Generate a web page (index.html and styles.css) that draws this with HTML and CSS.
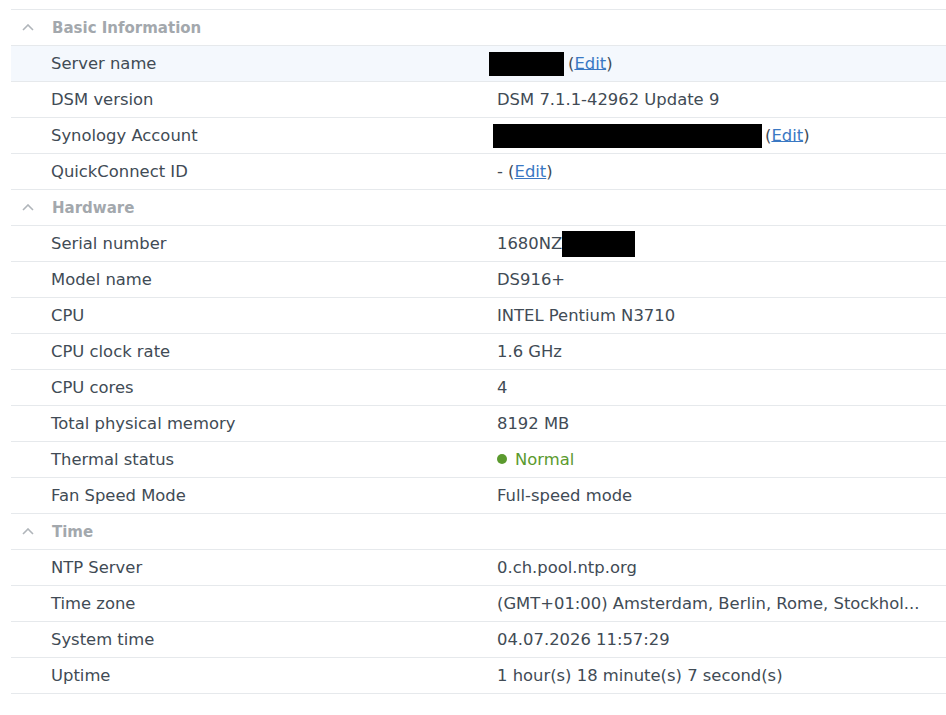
FILE: index.html
```html
<!DOCTYPE html>
<html lang="en">
<head>
    <meta charset="UTF-8">
    <meta name="viewport" content="width=device-width, initial-scale=1.0">
    <title>Info Center</title>
    <link rel="stylesheet" href="styles.css">
</head>
<body>
    <div class="panel">
        <table class="info-table">
            <colgroup>
                <col class="col-label">
                <col class="col-value">
            </colgroup>
            <tbody>
                <tr class="group"><td colspan="2"><svg class="chevron" viewBox="0 0 12 7" width="12" height="7"><polyline points="1,6 6,1 11,6" /></svg>Basic Information</td></tr>
                <tr class="selected">
                    <td>Server name</td>
                    <td><span class="redact redact-server"></span>(<a href="#">Edit</a>)</td>
                </tr>
                <tr><td>DSM version</td><td>DSM 7.1.1-42962 Update 9</td></tr>
                <tr>
                    <td>Synology Account</td>
                    <td><span class="redact redact-account"></span>(<a href="#">Edit</a>)</td>
                </tr>
                <tr><td>QuickConnect ID</td><td>- (<a href="#">Edit</a>)</td></tr>

                <tr class="group"><td colspan="2"><svg class="chevron" viewBox="0 0 12 7" width="12" height="7"><polyline points="1,6 6,1 11,6" /></svg>Hardware</td></tr>
                <tr><td>Serial number</td><td>1680NZ<span class="redact redact-serial"></span></td></tr>
                <tr><td>Model name</td><td>DS916+</td></tr>
                <tr><td>CPU</td><td>INTEL Pentium N3710</td></tr>
                <tr><td>CPU clock rate</td><td>1.6 GHz</td></tr>
                <tr><td>CPU cores</td><td>4</td></tr>
                <tr><td>Total physical memory</td><td>8192 MB</td></tr>
                <tr><td>Thermal status</td><td class="status-ok"><span class="dot"></span>Normal</td></tr>
                <tr><td>Fan Speed Mode</td><td>Full-speed mode</td></tr>

                <tr class="group"><td colspan="2"><svg class="chevron" viewBox="0 0 12 7" width="12" height="7"><polyline points="1,6 6,1 11,6" /></svg>Time</td></tr>
                <tr><td>NTP Server</td><td>0.ch.pool.ntp.org</td></tr>
                <tr><td>Time zone</td><td title="(GMT+01:00) Amsterdam, Berlin, Rome, Stockholm, Vienna">(GMT+01:00) Amsterdam, Berlin, Rome, Stockhol...</td></tr>
                <tr><td>System time</td><td>04.07.2026 11:57:29</td></tr>
                <tr><td>Uptime</td><td>1 hour(s) 18 minute(s) 7 second(s)</td></tr>
            </tbody>
        </table>
    </div>
</body>
</html>
```

FILE: styles.css
```css
body {
    margin: 0;
    background: #fff;
    font-family: 'DejaVu Sans', Verdana, sans-serif;
    font-size: 16.4px;
    color: #414b55;
}
.panel {
    padding: 9px 0 0 11px;
}
.info-table {
    width: 100%;
    border-collapse: collapse;
    table-layout: fixed;
    border-top: 1px solid #e6e9ec;
}
.col-label {
    width: 486px;
}
.info-table td {
    height: 35px;
    padding: 0;
    line-height: 20px;
    border-bottom: 1px solid #e6e9ec;
    white-space: nowrap;
    vertical-align: middle;
}
.info-table td:first-child {
    padding-left: 40px;
}
.group td {
    color: #a3a8ad;
    font-size: 15px;
    font-weight: bold;
    padding-left: 11px !important;
}
.chevron {
    fill: none;
    stroke: #b0b5ba;
    stroke-width: 1.6;
    margin-right: 18px;
    vertical-align: 2px;
}
.selected td {
    background: #f4f8fd;
}
.info-table a {
    color: #3a78c3;
    text-decoration: underline;
}
.redact {
    display: inline-block;
    background: #000;
    height: 24px;
    vertical-align: middle;
}
.redact-server {
    width: 75px;
    margin-left: -8px;
    margin-right: 4px;
}
.redact-account {
    width: 269px;
    margin-left: -4px;
    margin-right: 3px;
}
.redact-serial {
    width: 73px;
    height: 26px;
}
.status-ok {
    color: #5b9a2e;
}
.dot {
    display: inline-block;
    width: 10px;
    height: 10px;
    border-radius: 50%;
    background: #5b9a2e;
    margin-right: 8px;
    vertical-align: 1px;
}
```
